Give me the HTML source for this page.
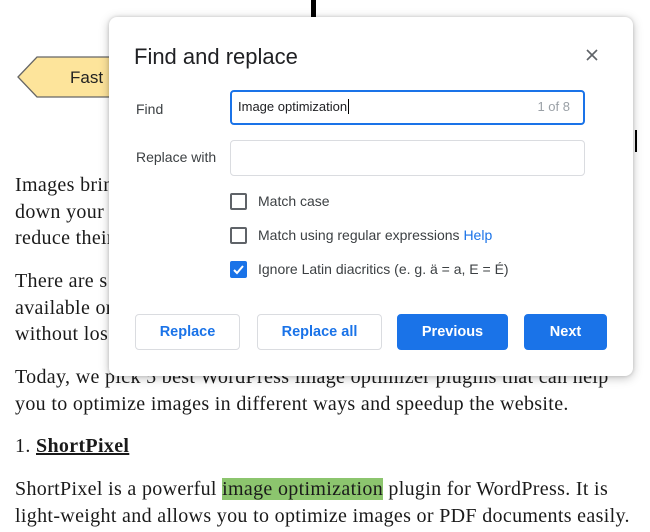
<!DOCTYPE html>
<html><head><meta charset="utf-8"><style>
body{margin:0;width:650px;height:532px;overflow:hidden;background:#fff;position:relative;font-family:"Liberation Serif",serif;color:#222}
.p{position:absolute;left:15px;font-size:20px;letter-spacing:0.33px;line-height:26.5px;white-space:nowrap;color:#1a1a1a}
.dlg{position:absolute;left:109px;top:17px;width:524px;height:359px;background:#fff;border-radius:8px;box-shadow:0 2px 10px rgba(0,0,0,.25),0 0 3px rgba(0,0,0,.15);font-family:"Liberation Sans",sans-serif}
.a{position:absolute}
.lbl{font-size:14px;color:#3c4043}
.inp{position:absolute;left:121px;width:355px;height:35px;border:1px solid #dadce0;border-radius:4px;box-sizing:border-box}
.cb{position:absolute;left:121px;width:17px;height:17px;border:2px solid #5f6368;border-radius:2px;box-sizing:border-box}
.btn{position:absolute;top:297px;height:36px;border-radius:4px;box-sizing:border-box;font-size:14.5px;font-weight:bold;text-align:center;line-height:34px}
.w{border:1px solid #dadce0;color:#1a73e8;background:#fff}
.b{background:#1a73e8;color:#fff;border:1px solid #1a73e8}
</style></head><body>
<div class="a" style="left:311px;top:0;width:5px;height:17px;background:#000"></div>
<div class="a" style="left:635px;top:130px;width:2px;height:22px;background:#000"></div>
<svg class="a" style="left:15px;top:55px" width="100" height="45"><polygon points="3,22 22,2 98,2 98,42 22,42" fill="#fde49b" stroke="#666" stroke-width="1.3"/><text x="55" y="28" font-family="Liberation Sans" font-size="17" fill="#222">Fast</text></svg>
<div class="p" style="top:172px">Images bring<br>down your<br>reduce their</div>
<div class="p" style="top:268px">There are s<br>available on<br>without los</div>
<div class="p" style="top:364px">Today, we pick 5 best WordPress image optimizer plugins that can help<br>you to optimize images in different ways and speedup the website.</div>
<div class="p" style="top:433px">1. <b><u>ShortPixel</u></b></div>
<div class="p" style="top:476px">ShortPixel is a powerful <span style="background:#8cc56e">image optimization</span> plugin for WordPress. It is<br>light-weight and allows you to optimize images or PDF documents easily.</div>
<div class="dlg">
<div class="a" style="left:25px;top:27px;font-size:22px;color:#202124">Find and replace</div>
<svg class="a" style="left:477px;top:32px" width="12" height="12"><path d="M1 1L11 11M11 1L1 11" stroke="#5f6368" stroke-width="1.6"/></svg>
<div class="a lbl" style="left:27px;top:84px">Find</div>
<div class="inp" style="top:73px;border:2px solid #1a73e8"><span class="a" style="left:6px;top:7px;font-size:13px;color:#202124">Image optimization<span style="border-left:1px solid #000;margin-left:1px"></span></span><span class="a" style="right:13px;top:7px;font-size:13px;color:#9aa0a6">1 of 8</span></div>
<div class="a lbl" style="left:27px;top:132px">Replace with</div>
<div class="inp" style="top:123px;height:36px"></div>
<div class="cb" style="top:176px"></div><div class="a lbl" style="left:149px;top:176px">Match case</div>
<div class="cb" style="top:210px"></div><div class="a lbl" style="left:149px;top:210px">Match using regular expressions <span style="color:#1a73e8">Help</span></div>
<div class="cb" style="top:244px;background:#1a73e8;border-color:#1a73e8"><svg width="13" height="13" style="position:absolute;left:0;top:0"><path d="M2 7L5 10L11 3" stroke="#fff" stroke-width="2" fill="none"/></svg></div><div class="a lbl" style="left:149px;top:244px">Ignore Latin diacritics (e. g. ä = a, E = É)</div>
<div class="btn w" style="left:26px;width:105px">Replace</div>
<div class="btn w" style="left:148px;width:125px">Replace all</div>
<div class="btn b" style="left:288px;width:111px">Previous</div>
<div class="btn b" style="left:415px;width:83px">Next</div>
</div>
</body></html>
